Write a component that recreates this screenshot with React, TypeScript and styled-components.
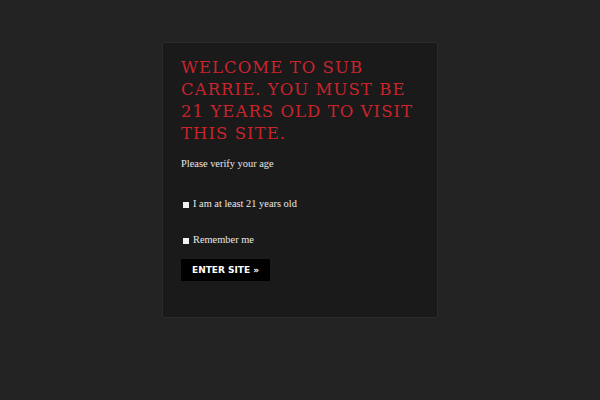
import styled, { createGlobalStyle } from 'styled-components';

const Global = createGlobalStyle`
  html, body {
    margin: 0;
    padding: 0;
    background: #232323;
  }
`;

const Page = styled.div`
  width: 600px;
  height: 400px;
  display: flex;
  justify-content: center;
  padding-top: 42px;
  box-sizing: border-box;
`;

const Panel = styled.div`
  box-sizing: border-box;
  width: 276px;
  height: 276px;
  background: #1a1a1a;
  border: 1px solid #2b2b2b;
  padding: 14px 18px 0 18px;
`;

const Title = styled.h1`
  margin: 0 0 13px 0;
  font-family: "DejaVu Serif", serif;
  font-weight: normal;
  font-size: 16.5px;
  line-height: 22px;
  letter-spacing: 1.05px;
  color: #c8242c;
  text-transform: uppercase;
`;

const Lead = styled.p`
  margin: 0 0 29px 0;
  font-family: "Liberation Serif", serif;
  font-size: 10.4px;
  color: #e8e8e8;
`;

const Check = styled.label<{ gap: number }>`
  display: flex;
  align-items: center;
  gap: 4px;
  margin-bottom: ${p => p.gap}px;
  font-family: "Liberation Serif", serif;
  font-size: 10.4px;
  color: #e8e8e8;

  & input {
    appearance: none;
    margin: 2px 0 0 2px;
    width: 6px;
    height: 6px;
    background: #f2f2f2;
    border: none;
  }
`;

const Button = styled.button`
  height: 22px;
  padding: 0 11px;
  background: #000;
  border: none;
  color: #fff;
  font-family: "DejaVu Sans", sans-serif;
  font-weight: bold;
  font-size: 9px;
  letter-spacing: 0;
  cursor: pointer;
`;

export default function App() {
  return (
    <>
      <Global />
      <Page>
        <Panel>
          <Title>Welcome to Sub Carrie. You must be 21 years old to visit this site.</Title>
          <Lead>Please verify your age</Lead>
          <Check gap={25}>
            <input type="checkbox" />
            I am at least 21 years old
          </Check>
          <Check gap={14}>
            <input type="checkbox" />
            Remember me
          </Check>
          <Button>ENTER SITE »</Button>
        </Panel>
      </Page>
    </>
  );
}
